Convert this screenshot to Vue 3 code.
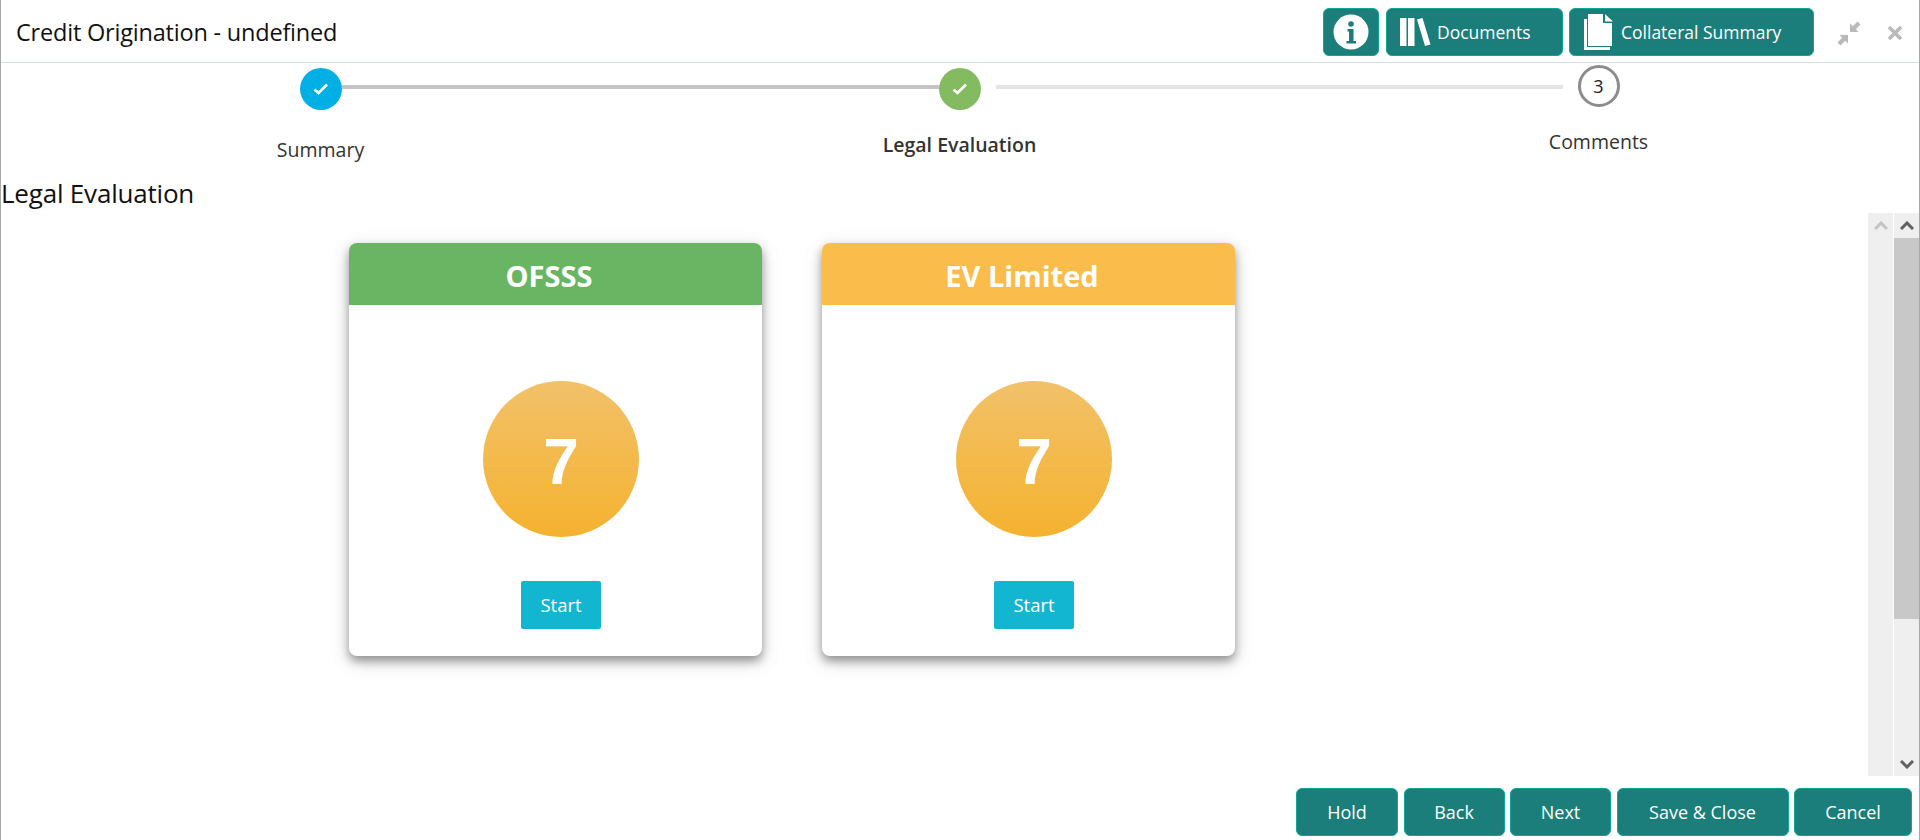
<template>
  <div class="page">
    <header class="topbar">
      <div class="title">Credit Origination - undefined</div>
      <div class="top-actions">
        <button class="btn btn-info" aria-label="Info">
          <svg width="36" height="36" viewBox="0 0 36 36">
            <circle cx="18" cy="18" r="17.5" fill="#fff" />
            <circle cx="18" cy="10" r="2.8" fill="#1b7e7a" />
            <path d="M14.5 15h6v12h2.5v2.5H13.5V27H16V17.5h-1.5z" fill="#1b7e7a" />
          </svg>
        </button>
        <button class="btn btn-docs">
          <svg width="31" height="28" viewBox="0 0 31 28">
            <rect x="0" y="0" width="6.5" height="28" fill="#fff" />
            <rect x="8" y="0" width="6.5" height="28" fill="#fff" />
            <path d="M17 1.500l5.500-1.500 8 26.500-5.500 1.500z" fill="#fff" />
          </svg>
          <span>Documents</span>
        </button>
        <button class="btn btn-collateral">
          <svg width="29" height="36" viewBox="0 0 29 36">
            <path d="M0 5h3v28h23v3H0z" fill="#fff" />
            <path d="M4 0h15v9h9v23H4z" fill="#fff" />
            <path d="M21 0l8 7.500h-8z" fill="#fff" />
          </svg>
          <span>Collateral Summary</span>
        </button>
        <svg class="win-icon" width="26" height="26" viewBox="0 0 26 26">
          <path d="M14 12V3.500l2.800 2.800L21.500 1.500l3 3-4.700 4.700 2.700 2.800z" fill="#b9b9b9" />
          <path d="M12 15v8.500l-2.800-2.800-4.700 4.800-3-3 4.700-4.700-2.700-3.100z" fill="#b9b9b9" />
        </svg>
        <svg class="win-icon close-icon" width="16" height="16" viewBox="0 0 16 16">
          <path d="M2 2l12 12M14 2L2 14" stroke="#b9b9b9" stroke-width="3.600" fill="none" />
        </svg>
      </div>
    </header>

    <div class="stepper">
      <div v-for="step in steps" :key="step.label" class="step" :class="step.cls">
        <div class="step-row">
          <div class="seg" :class="step.left"></div>
          <div class="dot">
            <svg v-if="step.done" width="16" height="12" viewBox="0 0 16 12">
              <path d="M1.500 6.500l4 3.500L14 1.500" stroke="#fff" stroke-width="2.600" fill="none" />
            </svg>
            <span v-else>{{ step.num }}</span>
          </div>
          <div class="seg" :class="step.right"></div>
        </div>
        <div class="step-label">{{ step.label }}</div>
      </div>
    </div>

    <h2 class="section-title">Legal Evaluation</h2>

    <div class="content">
      <div class="cards">
        <div v-for="card in cards" :key="card.name" class="card">
          <div class="card-head" :class="card.cls">{{ card.name }}</div>
          <div class="card-body">
            <div class="count">{{ card.count }}</div>
            <button class="start">Start</button>
          </div>
        </div>
      </div>
      <div class="scroll scroll-off">
        <svg width="14" height="9" viewBox="0 0 14 9"><path d="M1 8l6-6 6 6" stroke="#c4c4c4" stroke-width="3" fill="none" /></svg>
      </div>
      <div class="scroll">
        <svg width="14" height="9" viewBox="0 0 14 9"><path d="M1 8l6-6 6 6" stroke="#616161" stroke-width="3" fill="none" /></svg>
        <div class="thumb"></div>
        <svg class="arrow-down" width="14" height="9" viewBox="0 0 14 9"><path d="M1 1l6 6 6-6" stroke="#616161" stroke-width="3" fill="none" /></svg>
      </div>
    </div>

    <footer class="footer">
      <button v-for="b in footerButtons" :key="b.text" class="btn btn-foot" :style="{ width: b.width + 'px' }">{{ b.text }}</button>
    </footer>
  </div>
</template>

<script setup>
// 步骤条数据
const steps = [
  { label: 'Summary', done: true, cls: 'step-first', left: 'seg-none', right: 'seg-dark' },
  { label: 'Legal Evaluation', done: true, cls: 'step-active', left: 'seg-dark', right: 'seg-light seg-gap-left' },
  { label: 'Comments', done: false, num: 3, cls: 'step-todo', left: 'seg-light seg-gap-right', right: 'seg-none' }
];

const cards = [
  { name: 'OFSSS', count: 7, cls: 'head-green' },
  { name: 'EV Limited', count: 7, cls: 'head-orange' }
];

const footerButtons = [
  { text: 'Hold', width: 102 },
  { text: 'Back', width: 101 },
  { text: 'Next', width: 101 },
  { text: 'Save & Close', width: 172 },
  { text: 'Cancel', width: 118 }
];
</script>

<style scoped>
.page {
  width: 1920px;
  height: 840px;
  box-sizing: border-box;
  border-left: 1px solid #a8a8a8;
  border-right: 1px solid #a8a8a8;
  background: #fff;
  display: flex;
  flex-direction: column;
  overflow: hidden;
  font-family: 'Open Sans', 'Noto Sans', sans-serif;
  color: #111;
}

.topbar {
  height: 62px;
  flex: none;
  box-sizing: content-box;
  border-bottom: 1px solid #d9e0e5;
  display: flex;
  align-items: center;
  justify-content: space-between;
  padding: 0 16px 0 15px;
}

.title {
  font-size: 23.5px;
  letter-spacing: -0.2px;
  padding-top: 2px;
}

.top-actions {
  display: flex;
  align-items: flex-start;
  padding-top: 8px;
  height: 54px;
  box-sizing: border-box;
  align-self: flex-start;
}

.btn {
  background: #1b7e7a;
  border: 1px solid #0fa696;
  border-radius: 6px;
  color: #fff;
  font-family: inherit;
  font-size: 17.5px;
  height: 48px;
  padding: 0;
  box-sizing: border-box;
  display: flex;
  align-items: center;
  justify-content: center;
}

.btn-info {
  width: 56px;
}

.btn-docs {
  width: 177px;
  margin-left: 7px;
  justify-content: flex-start;
  padding-left: 13px;
  gap: 6px;
}

.btn-collateral {
  width: 245px;
  margin-left: 6px;
  justify-content: flex-start;
  padding-left: 14px;
  gap: 8px;
}

.win-icon {
  margin-left: 22px;
  margin-top: 12px;
}

.close-icon {
  margin-left: 25px;
  margin-top: 17px;
}

.stepper {
  flex: none;
  display: flex;
  height: 107px;
}

.step {
  width: 639px;
  display: flex;
  flex-direction: column;
  align-items: center;
}

.step-row {
  width: 100%;
  display: flex;
  align-items: flex-start;
  padding-top: 2px;
}

/* 两侧线段等宽，圆点才能居中 */
.seg {
  width: calc((100% - 42px) / 2);
  flex: none;
  box-sizing: border-box;
  height: 4px;
  margin-top: 20px;
  background-clip: content-box;
}

.seg-none {
  background: transparent;
}

.seg-dark {
  background-color: #c4c4c4;
}

.seg-light {
  background-color: #e4e4e4;
}

.seg-gap-left {
  padding-left: 15px;
}

.seg-gap-right {
  padding-right: 15px;
}

.dot {
  width: 42px;
  height: 42px;
  border-radius: 50%;
  margin-top: 3px;
  box-sizing: border-box;
  display: flex;
  align-items: center;
  justify-content: center;
  flex: none;
  font-size: 18px;
}

.step-first .dot {
  background: #00afe4;
}

.step-active .dot {
  background: #84bb60;
}

.step-todo .dot {
  background: #fff;
  border: 3px solid #8c8c8c;
  margin-top: 0;
  color: #222;
}

.step-label {
  font-size: 19.5px;
  color: #333;
}

.step-first .step-label {
  margin-top: 26px;
}

.step-active .step-label {
  margin-top: 21px;
  font-weight: 600;
}

.step-todo .step-label {
  margin-top: 21px;
}

.section-title {
  flex: none;
  margin: 0;
  height: 43px;
  font-size: 26px;
  line-height: 46px;
  font-weight: 400;
  letter-spacing: -0.2px;
}

.content {
  flex: none;
  height: 563px;
  display: flex;
}

.cards {
  flex: 1;
  display: flex;
  align-items: flex-start;
  gap: 60px;
  padding: 30px 0 0 348px;
}

.card {
  width: 413px;
  height: 413px;
  border-radius: 8px;
  background: #fff;
  box-shadow: 0 5px 10px rgba(0, 0, 0, 0.36), 0 6px 20px rgba(0, 0, 0, 0.15);
  overflow: hidden;
  display: flex;
  flex-direction: column;
}

.card-head {
  height: 62px;
  flex: none;
  box-sizing: border-box;
  padding: 3px 13px 0 0;
  display: flex;
  align-items: center;
  justify-content: center;
  color: #fff;
  font-size: 29px;
  font-weight: 700;
}

.head-green {
  background: #6ab563;
}

.head-orange {
  background: #fabc4b;
}

.card-body {
  flex: 1;
  display: flex;
  flex-direction: column;
  align-items: center;
  padding: 76px 0 0 11px;
}

.count {
  width: 156px;
  height: 156px;
  box-sizing: border-box;
  padding-top: 5px;
  border-radius: 50%;
  background: linear-gradient(180deg, #f2c169, #f4b22f);
  color: #fff;
  font-family: 'Liberation Sans', Arial, sans-serif;
  font-weight: 700;
  font-size: 64px;
  display: flex;
  align-items: center;
  justify-content: center;
}

.start {
  margin-top: 44px;
  width: 80px;
  height: 48px;
  border: none;
  border-radius: 2px;
  background: #13b6d1;
  color: #fff;
  font-family: inherit;
  font-size: 18.5px;
  padding: 0 0 2px;
}

.scroll {
  width: 25px;
  flex: none;
  background: #efefef;
  margin-left: 1px;
  display: flex;
  flex-direction: column;
  align-items: center;
  padding-top: 8px;
  box-sizing: border-box;
}

.thumb {
  align-self: stretch;
  height: 381px;
  margin-top: 8px;
  background: #c8c8c8;
}

.arrow-down {
  margin-top: auto;
  margin-bottom: 7px;
}

.footer {
  flex: 1;
  display: flex;
  justify-content: flex-end;
  align-items: flex-start;
  gap: 5.5px;
  padding: 12px 7px 0 0;
}

.btn-foot {
  font-size: 18px;
}
</style>

<style>
html, body {
  margin: 0;
  background: #fff;
}
</style>
